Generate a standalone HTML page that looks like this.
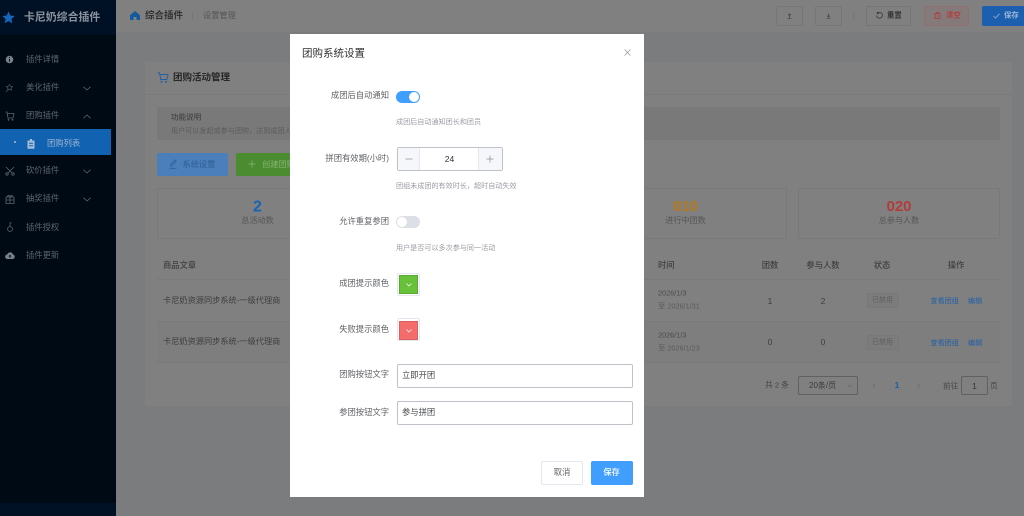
<!DOCTYPE html>
<html lang="zh"><head><meta charset="utf-8"><title>团购系统设置</title>
<style>
html,body{margin:0;padding:0;width:1024px;height:516px;overflow:hidden;background:#7b7c7e;font-family:"Liberation Sans","Noto Sans CJK SC",sans-serif}
#w{position:absolute;left:0;top:0;width:1024px;height:516px;overflow:hidden;background:#7b7c7e;filter:blur(.35px)}
.a{position:absolute;box-sizing:border-box}
.t{position:absolute;white-space:nowrap;transform:translateY(-50%);line-height:1.2}
.c{transform:translate(-50%,-50%)}
.r{transform:translate(-100%,-50%)}
svg{position:absolute;overflow:visible;fill:none}
.m{font-size:8.3px;color:#5b6470}
.th{font-size:8.3px;color:#3f3f3f;font-weight:500}
.td{font-size:8.2px;color:#3e3e3e}
.lnk{font-size:7.1px;color:#1f5fa8}
.lb{font-size:8.3px;color:#606266}
.hn{font-size:7.1px;color:#9a9ca3}
.btn{border:1px solid #767676;border-radius:2px}
.inp{background:#fff;border:1px solid #bfc2c8;border-radius:2px}
</style></head><body><div id="w">
<!-- sidebar -->
<div class="a" style="left:0;top:0;width:116px;height:516px;background:#000a15"></div>
<div class="a" style="left:0;top:0;width:116px;height:35px;background:#001126"></div>
<div class="a" style="left:0;top:503px;width:116px;height:13px;background:#001126"></div>
<svg style="left:2px;top:11px" width="13" height="13" viewBox="0 0 24 24"><path d="M12 1l3.4 7.3 7.9 1-5.8 5.4 1.5 7.9-7-3.9-7 3.9 1.5-7.9L.7 9.3l7.9-1z" fill="#1565b8"/></svg>
<span class="t" style="left:24px;top:17.5px;font-size:10.9px;font-weight:700;color:#8a929c">卡尼奶综合插件</span>
<div class="a" style="left:0;top:129px;width:111px;height:26px;background:#1162b0"></div>
<svg style="left:5px;top:55px" width="9" height="9" viewBox="0 0 10 10"><circle cx="5" cy="5" r="4.2" fill="#78808a"/><path d="M5 4.3v3M5 2.4v1" stroke="#000a15" stroke-width="1.1"/></svg>
<span class="t m" style="left:26px;top:59.5px">插件详情</span>
<svg style="left:5px;top:83px" width="9" height="10" viewBox="0 0 10 10" stroke="#4c545e" stroke-width=".8"><path d="M1 9.5L4 6M5 1l1 2 2.5.3-1.8 1.7.5 2.5L5 6.3 2.800 7.500l.4-2.500L1.500 3.300 4 3z"/></svg>
<span class="t m" style="left:26px;top:88px">美化插件</span>
<svg style="left:83px;top:86px" width="8" height="5" viewBox="0 0 8 5" stroke="#5b6470" stroke-width=".8"><path d="M.5 .8L4 4l3.500-3.200"/></svg>
<svg style="left:5px;top:111px" width="10" height="10" viewBox="0 0 10 10" stroke="#5b6470" stroke-width=".8"><path d="M.5 1h1.500l1 6h5l1-4.500H2.300"/><circle cx="3.500" cy="8.800" r=".5"/><circle cx="7.500" cy="8.800" r=".5"/></svg>
<span class="t m" style="left:26px;top:116px">团购插件</span>
<svg style="left:83px;top:114px" width="8" height="5" viewBox="0 0 8 5" stroke="#5b6470" stroke-width=".8"><path d="M.5 4.200L4 1l3.500 3.200"/></svg>
<div class="a" style="left:14px;top:141px;width:2px;height:2px;border-radius:50%;background:#a9bed6"></div>
<svg style="left:27px;top:139px" width="8" height="10" viewBox="0 0 8 10"><path d="M3 0h2v1.500h2.500V9.800H.5V1.500H3z" fill="#a5bdd6"/><path d="M2 4.200h4M2 6.800h4" stroke="#1162b0"/></svg>
<span class="t m" style="left:47px;top:143.500px;color:#9db4ce">团购列表</span>
<svg style="left:5px;top:166px" width="10" height="10" viewBox="0 0 10 10" stroke="#5b6470" stroke-width=".8"><path d="M1 1l6 6M9 1L3 7"/><circle cx="2" cy="8" r="1.200"/><circle cx="8" cy="8" r="1.200"/></svg>
<span class="t m" style="left:26px;top:171px">砍价插件</span>
<svg style="left:83px;top:169px" width="8" height="5" viewBox="0 0 8 5" stroke="#5b6470" stroke-width=".8"><path d="M.5 .8L4 4l3.500-3.200"/></svg>
<svg style="left:5px;top:194px" width="10" height="10" viewBox="0 0 10 10" stroke="#5b6470" stroke-width=".8"><path d="M1 3h8v6.500H1zM5 3v6.500M1 6h8M3 3c-1-2 1-2.500 2 0 1-2.500 3-2 2 0"/></svg>
<span class="t m" style="left:26px;top:199px">抽奖插件</span>
<svg style="left:83px;top:197px" width="8" height="5" viewBox="0 0 8 5" stroke="#5b6470" stroke-width=".8"><path d="M.5 .8L4 4l3.500-3.200"/></svg>
<svg style="left:5px;top:222px" width="10" height="10" viewBox="0 0 10 10" stroke="#5b6470" stroke-width=".8"><circle cx="5" cy="7" r="2.400"/><path d="M5 4.500V.5M5 .8h1.500"/></svg>
<span class="t m" style="left:26px;top:227.500px">插件授权</span>
<svg style="left:5px;top:251px" width="10" height="9" viewBox="0 0 10 9"><path d="M2.500 8A2.300 2.300 0 0 1 2.300 3.400 3 3 0 0 1 8 3.500 2.300 2.300 0 0 1 7.800 8z" fill="#78808a"/><path d="M5 7V4.500M3.800 5.500L5 4.300l1.200 1.200" stroke="#000a15" stroke-width=".7"/></svg>
<span class="t m" style="left:26px;top:256px">插件更新</span>
<!-- top bar -->
<div class="a" style="left:116px;top:0;width:908px;height:32px;background:#808080"></div>
<svg style="left:130px;top:11px" width="10" height="9" viewBox="0 0 10 9"><path d="M5 0L10 4.300V9H6.500V6h-3v3H0V4.300z" fill="#14589f"/></svg>
<span class="t" style="left:145px;top:15.500px;font-size:9.500px;font-weight:700;color:#333">综合插件</span>
<div class="a" style="left:192px;top:12px;width:1px;height:8px;background:#777"></div>
<span class="t" style="left:203px;top:15.500px;font-size:8.200px;color:#555">设置管理</span>
<div class="a btn" style="left:776px;top:6px;width:27px;height:19.500px"></div>
<svg style="left:787px;top:12.500px" width="5" height="6" viewBox="0 0 7 8" stroke="#444" stroke-width="1"><path d="M3.500 7V1M1.500 3l2-2 2 2M.5 7.400h6"/></svg>
<div class="a btn" style="left:815px;top:6px;width:27px;height:19.500px"></div>
<svg style="left:826px;top:12.500px" width="5" height="6" viewBox="0 0 7 8" stroke="#444" stroke-width="1"><path d="M3.500 .5V5.500M1.500 3.500l2 2 2-2M.5 7.400h6"/></svg>
<div class="a" style="left:853px;top:12px;width:1px;height:8px;background:#777"></div>
<div class="a btn" style="left:866px;top:6px;width:44.500px;height:19.500px"></div>
<svg style="left:876px;top:12px" width="7" height="7" viewBox="0 0 7 7" stroke="#333" stroke-width=".8"><path d="M1.300 1.400A2.900 2.900 0 1 1 .6 3.500M1.300 0v1.600h1.600"/></svg>
<span class="t" style="left:887px;top:16px;font-size:7.400px;font-weight:700;color:#333">重置</span>
<div class="a" style="left:924px;top:6px;width:45px;height:19.500px;border:1px solid #8f6f6f;border-radius:2px;background:#857a7a"></div>
<svg style="left:934px;top:12px" width="7" height="7" viewBox="0 0 7 7" stroke="#b03a3a" stroke-width=".8"><path d="M1 1.500h5V6.500H1zM2.500 1.500V.5h2v1M3.500 3v2"/></svg>
<span class="t" style="left:946px;top:16px;font-size:7.400px;font-weight:700;color:#b13e3e">清空</span>
<div class="a" style="left:982px;top:6px;width:46px;height:19.500px;background:#1c5fae;border-radius:2px"></div>
<svg style="left:993px;top:12.500px" width="7" height="6" viewBox="0 0 7 6" stroke="#8fb0d4" stroke-width=".8"><path d="M.5 3l2 2L6.500 .8"/></svg>
<span class="t" style="left:1004px;top:16px;font-size:7.400px;font-weight:700;color:#9db9d8">保存</span>
<!-- card -->
<div class="a" style="left:145px;top:62px;width:867px;height:344px;background:#808080;border-radius:2px"></div>
<div class="a" style="left:145px;top:94px;width:867px;height:1px;background:#7a7a7a"></div>
<svg style="left:157px;top:72px" width="12" height="11" viewBox="0 0 12 11" stroke="#1e5fa8" stroke-width=".9"><path d="M.5 .8h2l1.300 6.700h6l1.300-5H3"/><circle cx="4.500" cy="9.800" r=".6"/><circle cx="9" cy="9.800" r=".6"/></svg>
<span class="t" style="left:173px;top:78px;font-size:9.500px;font-weight:700;color:#262626">团购活动管理</span>
<div class="a" style="left:157px;top:107px;width:843px;height:33px;background:#797979"></div>
<span class="t" style="left:171px;top:117px;font-size:7.600px;font-weight:500;color:#444">功能说明</span>
<span class="t" style="left:171px;top:130.500px;font-size:7.100px;color:#5b5b5b">用户可以发起或参与团购，达到成团人数后自动成团</span>
<div class="a" style="left:157px;top:153px;width:71px;height:23px;background:#4a7fbb;border-radius:2px"></div>
<svg style="left:169px;top:159px" width="9" height="10" viewBox="0 0 9 10" stroke="#2f5f96" stroke-width=".8"><path d="M1.500 7l.3-1.800L6 1l1.300 1.300L3.200 6.600zM.5 9.300h7"/></svg>
<span class="t" style="left:182.500px;top:164.500px;font-size:8.200px;color:#2f5d92">系统设置</span>
<div class="a" style="left:236px;top:153px;width:70px;height:23px;background:#4a8c2f;border-radius:2px"></div>
<svg style="left:248px;top:160px" width="8" height="8" viewBox="0 0 8 8" stroke="#86b474" stroke-width=".8"><path d="M4 .5v7M.5 4h7"/></svg>
<span class="t" style="left:262px;top:164.500px;font-size:8.200px;color:#86b474">创建团购</span>
<div class="a" style="left:157px;top:188px;width:202px;height:51px;border:1px solid #797979;border-radius:2px"></div>
<div class="a" style="left:585px;top:188px;width:202px;height:51px;border:1px solid #797979;border-radius:2px"></div>
<div class="a" style="left:798px;top:188px;width:202px;height:51px;border:1px solid #797979;border-radius:2px"></div>
<span class="t c" style="left:257.500px;top:207px;font-size:16px;font-weight:700;color:#1763b5">2</span>
<span class="t c" style="left:257.500px;top:221px;font-size:8.100px;color:#555">总活动数</span>
<span class="t c" style="left:685.500px;top:207px;font-size:15px;font-weight:700;color:#b5791c">010</span>
<span class="t c" style="left:685.500px;top:221px;font-size:8.100px;color:#555">进行中团数</span>
<span class="t c" style="left:899px;top:207px;font-size:15px;font-weight:700;color:#b53b3b">020</span>
<span class="t c" style="left:899px;top:221px;font-size:8.100px;color:#555">总参与人数</span>
<!-- table -->
<div class="a" style="left:157px;top:279px;width:843px;height:1px;background:#7a7a7a"></div>
<div class="a" style="left:157px;top:321px;width:843px;height:42px;background:#7e7e7e"></div>
<div class="a" style="left:157px;top:321px;width:843px;height:1px;background:#7a7a7a"></div>
<div class="a" style="left:157px;top:362px;width:843px;height:1px;background:#7a7a7a"></div>
<span class="t th" style="left:163px;top:265.500px">商品文章</span>
<span class="t th" style="left:658px;top:265.500px">时间</span>
<span class="t th c" style="left:770px;top:265.500px">团数</span>
<span class="t th c" style="left:823px;top:265.500px">参与人数</span>
<span class="t th c" style="left:882px;top:265.500px">状态</span>
<span class="t th c" style="left:956px;top:265.500px">操作</span>
<span class="t td" style="left:163px;top:300.500px">卡尼奶资源同步系统-一级代理商</span>
<span class="t td" style="left:163px;top:342px">卡尼奶资源同步系统-一级代理商</span>
<span class="t" style="left:658px;top:293.500px;font-size:7.300px;color:#4a4a4a">2026/1/3</span>
<span class="t" style="left:658px;top:307px;font-size:7.300px;color:#5a5a5a">至 2026/1/31</span>
<span class="t" style="left:658px;top:335.500px;font-size:7.300px;color:#4a4a4a">2026/1/3</span>
<span class="t" style="left:658px;top:349px;font-size:7.300px;color:#5a5a5a">至 2026/1/23</span>
<span class="t td c" style="left:770px;top:300.500px;font-size:8.500px">1</span><span class="t td c" style="left:823px;top:300.500px;font-size:8.500px">2</span>
<span class="t td c" style="left:770px;top:342px;font-size:8.500px">0</span><span class="t td c" style="left:823px;top:342px;font-size:8.500px">0</span>
<div class="a" style="left:866.500px;top:293px;width:32px;height:15px;background:#7c7c7c;border:1px solid #787878;border-radius:2px"></div>
<span class="t c" style="left:882.500px;top:300.500px;font-size:7px;color:#5e5e5e">已禁用</span>
<div class="a" style="left:866.500px;top:335px;width:32px;height:15px;background:#7c7c7c;border:1px solid #787878;border-radius:2px"></div>
<span class="t c" style="left:882.500px;top:342.500px;font-size:7px;color:#5e5e5e">已禁用</span>
<span class="t lnk" style="left:930.500px;top:300.500px">查看团组</span><span class="t lnk" style="left:968px;top:300.500px">编辑</span>
<span class="t lnk" style="left:930.500px;top:342.500px">查看团组</span><span class="t lnk" style="left:968px;top:342.500px">编辑</span>
<!-- pagination -->
<span class="t" style="left:765px;top:384.500px;font-size:7.700px;color:#444">共 2 条</span>
<div class="a" style="left:798px;top:376px;width:60px;height:18.500px;border:1px solid #606060;border-radius:2px"></div>
<span class="t" style="left:809px;top:385.500px;font-size:8px;color:#3a3a3a">20条/页</span>
<svg style="left:847px;top:384px" width="6" height="4" viewBox="0 0 6 4" stroke="#666" stroke-width=".6"><path d="M.5 .5L3 3 5.500 .5"/></svg>
<svg style="left:872px;top:383px" width="4" height="6" viewBox="0 0 4 6" stroke="#6a6a6a" stroke-width=".6"><path d="M3.500 .5L1 3l2.500 2.500"/></svg>
<span class="t c" style="left:897px;top:384.500px;font-size:8.500px;font-weight:700;color:#1a5fa8">1</span>
<svg style="left:917px;top:383px" width="4" height="6" viewBox="0 0 4 6" stroke="#6a6a6a" stroke-width=".6"><path d="M.5 .5L3 3 .5 5.500"/></svg>
<span class="t" style="left:943px;top:385.500px;font-size:7.700px;color:#444">前往</span>
<div class="a" style="left:961px;top:376px;width:27px;height:18.500px;border:1px solid #606060;border-radius:2px"></div>
<span class="t c" style="left:974.500px;top:385.500px;font-size:8.500px;color:#333">1</span>
<span class="t" style="left:990px;top:385.500px;font-size:7.700px;color:#444">页</span>
<!-- modal -->
<div class="a" style="left:290px;top:34px;width:354px;height:463px;background:#fff"></div>
<span class="t" style="left:302px;top:54px;font-size:10.500px;color:#303133">团购系统设置</span>
<svg style="left:624px;top:49px" width="7" height="7" viewBox="0 0 7 7" stroke="#909399" stroke-width=".7"><path d="M.5 .5l6 6M6.500 .5l-6 6"/></svg>
<span class="t lb r" style="left:389px;top:96px">成团后自动通知</span>
<div class="a" style="left:396px;top:91px;width:24px;height:12px;border-radius:6px;background:#409eff"></div>
<div class="a" style="left:409px;top:92px;width:10px;height:10px;border-radius:50%;background:#fff"></div>
<span class="t hn" style="left:396px;top:122px">成团后自动通知团长和团员</span>
<span class="t lb r" style="left:389px;top:158.500px">拼团有效期(小时)</span>
<div class="a inp" style="left:397px;top:147px;width:106px;height:24px"></div>
<div class="a" style="left:398px;top:148px;width:22px;height:22px;background:#f5f7fa;border-right:1px solid #e4e7ed"></div>
<div class="a" style="left:478px;top:148px;width:24px;height:22px;background:#f5f7fa;border-left:1px solid #e4e7ed"></div>
<svg style="left:405px;top:155px" width="8" height="8" viewBox="0 0 8 8" stroke="#8a8d93" stroke-width=".7"><path d="M.5 4h7"/></svg>
<svg style="left:486px;top:155px" width="8" height="8" viewBox="0 0 8 8" stroke="#8a8d93" stroke-width=".7"><path d="M.5 4h7M4 .5v7"/></svg>
<span class="t c" style="left:449.500px;top:159px;font-size:8.500px;color:#303133">24</span>
<span class="t hn" style="left:396px;top:185.500px">团组未成团的有效时长，超时自动失效</span>
<span class="t lb r" style="left:389px;top:222px">允许重复参团</span>
<div class="a" style="left:396px;top:216px;width:24px;height:12px;border-radius:6px;background:#dcdfe6"></div>
<div class="a" style="left:397px;top:217px;width:10px;height:10px;border-radius:50%;background:#fff"></div>
<span class="t hn" style="left:396px;top:248px">用户是否可以多次参与同一活动</span>
<span class="t lb r" style="left:389px;top:284px">成团提示颜色</span>
<div class="a" style="left:397px;top:273px;width:23px;height:23px;border:1px solid #e4e7ed;border-radius:2px"></div>
<div class="a" style="left:399px;top:275px;width:19px;height:19px;background:#67c23a;border:1px solid #5aa832"></div>
<svg style="left:405.500px;top:283px" width="6" height="4" viewBox="0 0 6 4" stroke="#fff" stroke-width=".7"><path d="M.5 .5L3 3 5.500 .5"/></svg>
<span class="t lb r" style="left:389px;top:329.500px">失败提示颜色</span>
<div class="a" style="left:397px;top:318px;width:23px;height:23px;border:1px solid #e4e7ed;border-radius:2px"></div>
<div class="a" style="left:399px;top:320.500px;width:19px;height:19px;background:#f56c6c;border:1px solid #d86060"></div>
<svg style="left:405.500px;top:328.500px" width="6" height="4" viewBox="0 0 6 4" stroke="#fff" stroke-width=".7"><path d="M.5 .5L3 3 5.500 .5"/></svg>
<span class="t lb r" style="left:389px;top:375px">团购按钮文字</span>
<div class="a inp" style="left:397px;top:363.500px;width:236px;height:24px"></div>
<span class="t" style="left:402px;top:375.500px;font-size:8.300px;color:#4a4c50">立即开团</span>
<span class="t lb r" style="left:389px;top:412.500px">参团按钮文字</span>
<div class="a inp" style="left:397px;top:401px;width:236px;height:24px"></div>
<span class="t" style="left:402px;top:413px;font-size:8.300px;color:#4a4c50">参与拼团</span>
<div class="a" style="left:541px;top:461px;width:42px;height:24px;background:#fff;border:1px solid #e4e7ed;border-radius:2px"></div>
<span class="t c" style="left:562px;top:473px;font-size:8.300px;color:#606266">取消</span>
<div class="a" style="left:591px;top:461px;width:41.500px;height:24px;background:#409eff;border-radius:2px"></div>
<span class="t c" style="left:611.500px;top:473px;font-size:8.300px;font-weight:500;color:#fff">保存</span>
</div></body></html>
